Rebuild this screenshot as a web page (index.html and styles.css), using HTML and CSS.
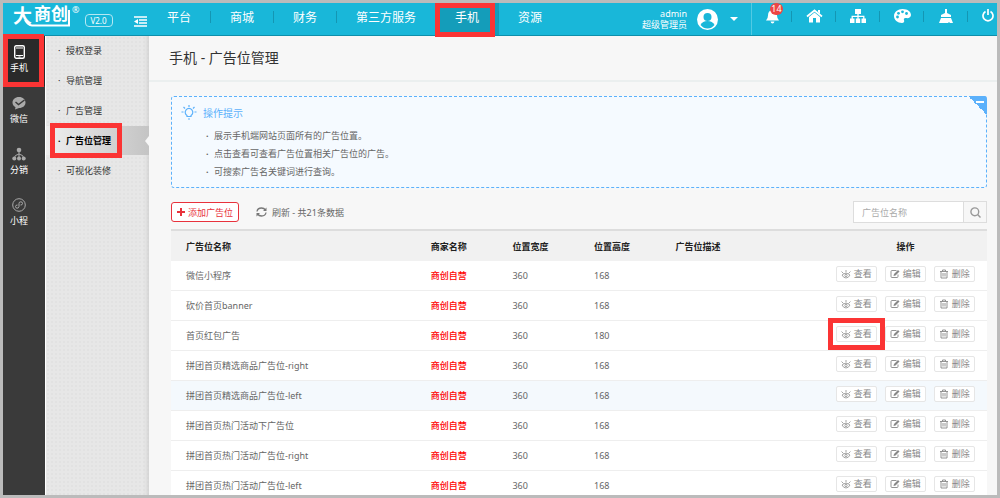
FILE: index.html
```
<!DOCTYPE html>
<html lang="zh-CN">
<head>
  <meta charset="utf-8">
  <title>手机 - 广告位管理</title>
  <link rel="stylesheet" href="styles.css">
</head>
<body>
  <!-- Icons -->
  <svg class="sprite" aria-hidden="true">
    <symbol id="i-view" viewBox="0 0 20 20"><path d="M2 12q8-7 16 0-3 6-8 6t-8-6zM1 5l4 4M19 5l-4 4M10 2v5" fill="none" stroke="currentColor" stroke-width="1.500"/><circle cx="10" cy="13" r="2.300" fill="none" stroke="currentColor" stroke-width="1.500"/></symbol>
    <symbol id="i-edit" viewBox="0 0 20 20"><path d="M13 3H4Q2 3 2 5v10q0 2 2 2h10q2 0 2-2v-4" fill="none" stroke="currentColor" stroke-width="1.800"/><path d="M7 14l1-4 8-8 3 3-8 8z" fill="currentColor"/></symbol>
    <symbol id="i-del" viewBox="0 0 20 20"><path d="M2 5h16M7 5V2h6v3M4 5v13h12V5M8 8v7M12 8v7" fill="none" stroke="currentColor" stroke-width="1.800"/></symbol>
  </svg>

  <div class="frame">
    <!-- Top bar -->
    <header class="header">
      <div class="brand">
        <a href="#" class="logo">大<span>商创</span><svg class="logo-line" viewBox="0 0 58 22"><path d="M12 14q3 5 7 5.500h37V4" fill="none" stroke="#fff" stroke-width="2"/></svg></a>
        <sup class="reg">®</sup>
        <span class="version">V2.0</span>
        <button class="fold" aria-label="收起菜单"><svg width="13" height="11" viewBox="0 0 13 11"><path d="M0 1h13M5 4h8M5 7h8M0 10h13" stroke="#fff" stroke-width="1.600"/><path d="M4 3v5L0 5.500z" fill="#fff"/></svg></button>
      </div>
      <nav class="nav">
        <a href="#">平台</a>
        <a href="#">商城</a>
        <a href="#">财务</a>
        <a href="#">第三方服务</a>
        <a href="#" class="current">手机<span class="mark mark-nav"></span></a>
        <a href="#">资源</a>
      </nav>
      <div class="user">
        <div class="user-name">admin<br>超级管理员</div>
        <svg width="21" height="21" viewBox="0 0 21 21"><circle cx="10.500" cy="10.500" r="10.500" fill="#fff"/><circle cx="10.500" cy="8" r="4" fill="#19b7d9"/><path d="M3.500 16q2-4 7-4t7 4q-3 3.500-7 3.500t-7-3.500z" fill="#19b7d9"/></svg>
        <span class="caret"></span>
      </div>
      <div class="tools">
        <button class="tool tool-bell" aria-label="消息"><svg width="13" height="15" viewBox="0 0 13 15"><path d="M6.500 0q1 0 1 1.300Q11 2 11 6.500q0 3 2 5H0q2-2 2-5Q2 2 5.500 1.300 5.500 0 6.500 0zM4.500 12.500h4q-.5 2-2 2t-2-2z" fill="#fff"/></svg><span class="badge">14</span></button>
        <button class="tool" aria-label="首页"><svg width="17" height="14" viewBox="0 0 17 14"><path d="M1 7.500l7.500-6 7.500 6" fill="none" stroke="#fff" stroke-width="1.800"/><path d="M12 1h2v4l-2-2zM3 8l5.500-4.500L14 8v5.500h-4V9H7v4.500H3z" fill="#fff"/></svg></button>
        <button class="tool" aria-label="站点地图"><svg width="16" height="14" viewBox="0 0 16 14"><path d="M5 0h6v5H5zM0 9.500h4.500V14H0zM5.800 9.500h4.400V14H5.800zM11.500 9.500H16V14h-4.500z" fill="#fff"/><path d="M8 4v6M2.200 10V7.300h11.600V10" fill="none" stroke="#fff" stroke-width="1.300"/></svg></button>
        <button class="tool" aria-label="换肤"><svg width="17" height="14" viewBox="0 0 17 14"><path d="M8.500 0C14 0 17 3 17 6c0 2.500-2.500 3.500-5 3-2-.3-2.500 1-2 2 .8 2-.5 3-2 3C3.500 14 0 11 0 7s4-7 8.500-7z" fill="#fff"/><g fill="#19b7d9"><circle cx="3.500" cy="8" r="1.400"/><circle cx="4.500" cy="4.300" r="1.400"/><circle cx="8.500" cy="2.800" r="1.400"/><circle cx="12.500" cy="4.500" r="1.400"/></g></svg></button>
        <button class="tool" aria-label="清除缓存"><svg width="14" height="14" viewBox="0 0 14 14"><path d="M6 0h2v4l4 2v2H2V6l4-2zM2 9h10l2 5h-3l-1-1-1 1H0z" fill="#fff"/></svg></button>
        <button class="tool tool-exit" aria-label="退出"><svg width="12" height="13" viewBox="0 0 12 13"><path d="M3.500 2.500a5 5 0 1 0 5 0M6 0v6" fill="none" stroke="#fff" stroke-width="1.700"/></svg></button>
      </div>
    </header>

    <div class="main">
      <!-- Left modules -->
      <aside class="modules">
        <a href="#" class="module current">
          <svg width="11" height="14" viewBox="0 0 11 14"><rect x=".7" y=".7" width="9.600" height="12.600" rx="1.500" fill="none" stroke="#fff" stroke-width="1.400"/><path d="M2 3h7M2 10.500h7" stroke="#fff"/><path d="M4.500 12h2" stroke="#fff"/></svg>
          手机<span class="mark mark-module"></span>
        </a>
        <a href="#" class="module">
          <svg width="14" height="14" viewBox="0 0 14 14"><path d="M7 1c4 0 6.500 2.500 6.500 5.500S11 12 7 12l-4 1.500.5-2.300C1.500 10 .5 8.500.5 6.500.5 3.500 3 1 7 1z" fill="#aaa"/><path d="M3.500 6l3 2.500 6-4.500" fill="none" stroke="#3a3a3a" stroke-width="1.500"/></svg>
          微信
        </a>
        <a href="#" class="module">
          <svg width="14" height="14" viewBox="0 0 14 14"><g fill="#aaa"><circle cx="7" cy="3" r="2.300"/><circle cx="2.300" cy="11.500" r="2"/><circle cx="7" cy="11.500" r="2"/><circle cx="11.700" cy="11.500" r="2"/></g><path d="M7 4v7M2.300 11q0-3 4.700-4 4.700 1 4.700 4" fill="none" stroke="#aaa"/></svg>
          分销
        </a>
        <a href="#" class="module">
          <svg width="14" height="14" viewBox="0 0 14 14"><circle cx="7" cy="7" r="6.300" fill="none" stroke="#aaa"/><path d="M5.500 7Q3.500 7 3.500 8.500T5 10.200 7 8.500V5.500Q7 3.800 8.800 3.800t1.700 1.700T8.500 7" fill="none" stroke="#aaa"/></svg>
          小程
        </a>
      </aside>

      <!-- Sub menu -->
      <nav class="submenu">
        <a href="#">授权登录</a>
        <a href="#">导航管理</a>
        <a href="#">广告管理</a>
        <a href="#" class="current">广告位管理<span class="mark mark-sub"></span></a>
        <a href="#">可视化装修</a>
      </nav>

      <!-- Content -->
      <main class="content">
        <h1 class="title">手机 - 广告位管理</h1>

        <section class="tips">
          <button class="tips-fold" aria-label="收起提示"></button>
          <h2><svg width="16" height="16" viewBox="0 0 16 16"><path d="M6 11.500V10.500A3.800 3.800 0 1 1 10 10.500v1zM7 14h2M8 0v2M.5 7h2M13.500 7h2M2.500 2l1.500 1.500M13.500 2L12 3.500" fill="none" stroke="#5cb1fb" stroke-width="1.200"/></svg>操作提示</h2>
          <ul>
            <li>展示手机端网站页面所有的广告位置。</li>
            <li>点击查看可查看广告位置相关广告位的广告。</li>
            <li>可搜索广告名关键词进行查询。</li>
          </ul>
        </section>

        <div class="toolbar">
          <button class="add"><svg width="8" height="8" viewBox="0 0 8 8"><path d="M4 0v8M0 4h8" stroke="#e8323c" stroke-width="2"/></svg>添加广告位</button>
          <button class="refresh"><svg width="11" height="10" viewBox="0 0 11 10"><path d="M1 4.500Q1.500 1 5.500 1q2.500 0 4 2M10 5.500Q9.500 9 5.500 9 3 9 1.500 7" fill="none" stroke="#777" stroke-width="1.300"/><path d="M10.500.5V4H7zM.5 9.500V6H4z" fill="#777"/></svg>刷新 - 共21条数据</button>
          <form class="search">
            <input type="text" placeholder="广告位名称" aria-label="广告位名称">
            <button type="button" aria-label="搜索"><svg width="11" height="11" viewBox="0 0 11 11"><circle cx="4.800" cy="4.800" r="3.900" fill="none" stroke="#999" stroke-width="1.400"/><path d="M7.600 7.600L10.500 10.500" stroke="#999" stroke-width="1.400"/></svg></button>
          </form>
        </div>

        <table class="list">
          <thead>
            <tr><th class="w30">广告位名称</th><th class="w10">商家名称</th><th class="w10">位置宽度</th><th class="w10">位置高度</th><th class="w20">广告位描述</th><th class="w20 handle">操作</th></tr>
          </thead>
          <tbody>
            <tr>
              <td>微信小程序</td><td class="shop">商创自营</td><td>360</td><td>168</td><td></td>
              <td class="handle"><div class="btns"><button><svg><use href="#i-view"/></svg>查看</button><button><svg><use href="#i-edit"/></svg>编辑</button><button><svg><use href="#i-del"/></svg>删除</button></div></td>
            </tr>
            <tr>
              <td>砍价首页banner</td><td class="shop">商创自营</td><td>360</td><td>168</td><td></td>
              <td class="handle"><div class="btns"><button><svg><use href="#i-view"/></svg>查看</button><button><svg><use href="#i-edit"/></svg>编辑</button><button><svg><use href="#i-del"/></svg>删除</button></div></td>
            </tr>
            <tr>
              <td>首页红包广告</td><td class="shop">商创自营</td><td>360</td><td>180</td><td></td>
              <td class="handle"><div class="btns"><button><svg><use href="#i-view"/></svg>查看<span class="mark mark-view"></span></button><button><svg><use href="#i-edit"/></svg>编辑</button><button><svg><use href="#i-del"/></svg>删除</button></div></td>
            </tr>
            <tr>
              <td>拼团首页精选商品广告位-right</td><td class="shop">商创自营</td><td>360</td><td>168</td><td></td>
              <td class="handle"><div class="btns"><button><svg><use href="#i-view"/></svg>查看</button><button><svg><use href="#i-edit"/></svg>编辑</button><button><svg><use href="#i-del"/></svg>删除</button></div></td>
            </tr>
            <tr class="hover">
              <td>拼团首页精选商品广告位-left</td><td class="shop">商创自营</td><td>360</td><td>168</td><td></td>
              <td class="handle"><div class="btns"><button><svg><use href="#i-view"/></svg>查看</button><button><svg><use href="#i-edit"/></svg>编辑</button><button><svg><use href="#i-del"/></svg>删除</button></div></td>
            </tr>
            <tr>
              <td>拼团首页热门活动下广告位</td><td class="shop">商创自营</td><td>360</td><td>168</td><td></td>
              <td class="handle"><div class="btns"><button><svg><use href="#i-view"/></svg>查看</button><button><svg><use href="#i-edit"/></svg>编辑</button><button><svg><use href="#i-del"/></svg>删除</button></div></td>
            </tr>
            <tr>
              <td>拼团首页热门活动广告位-right</td><td class="shop">商创自营</td><td>360</td><td>168</td><td></td>
              <td class="handle"><div class="btns"><button><svg><use href="#i-view"/></svg>查看</button><button><svg><use href="#i-edit"/></svg>编辑</button><button><svg><use href="#i-del"/></svg>删除</button></div></td>
            </tr>
            <tr>
              <td>拼团首页热门活动广告位-left</td><td class="shop">商创自营</td><td>360</td><td>168</td><td></td>
              <td class="handle"><div class="btns"><button><svg><use href="#i-view"/></svg>查看</button><button><svg><use href="#i-edit"/></svg>编辑</button><button><svg><use href="#i-del"/></svg>删除</button></div></td>
            </tr>
          </tbody>
        </table>
      </main>
    </div>
  </div>
</body>
</html>
```
FILE: styles.css
```
* {
  box-sizing: border-box;
}

body {
  margin: 0;
  font-family: "Noto Sans", "Noto Sans CJK SC", sans-serif;
  font-size: 9px;
  color: #666;
}

a {
  color: inherit;
  text-decoration: none;
}

button, input {
  font: inherit;
  color: inherit;
  margin: 0;
  padding: 0;
  border: none;
  background: none;
}

button {
  cursor: pointer;
}

svg {
  flex: none;
}

.sprite {
  display: none;
}

.frame {
  height: 100vh;
  border: 3px solid #bbb;
  display: flex;
  flex-direction: column;
  overflow: hidden;
}

/* red highlight boxes */
.mark {
  position: absolute;
  border: 5px solid #fb3434;
  pointer-events: none;
  z-index: 5;
}

.mark-nav { inset: 0 4px -2px -1px; }
.mark-module { inset: -2px 1px -1px 0; }
.mark-sub { inset: -3px 27px -3px 4px; }
.mark-view { inset: -9px; }

/* Header */
.header {
  display: flex;
  flex: none;
  height: 33px;
  background: #19b7d9;
  border-bottom: 1px solid #0e8fab;
  color: #fff;
}

.brand {
  display: flex;
  width: 145px;
  padding-left: 10px;
}

.logo {
  position: relative;
  width: 58px;
  font-size: 19px;
  font-weight: bold;
  line-height: 27px;
  white-space: nowrap;
}

.logo span {
  font-size: 17px;
  vertical-align: top;
  line-height: 22px;
  margin-left: 2px;
}

.logo-line {
  position: absolute;
  left: 0;
  top: 3px;
  width: 58px;
  height: 22px;
}

.reg {
  font-size: 9px;
  line-height: 14px;
  margin-left: 1px;
}

.version {
  width: 28px;
  height: 13px;
  margin: 11px 0 0 5px;
  border: 1px solid #b5e8f3;
  border-radius: 4px;
  font-size: 8px;
  line-height: 11px;
  text-align: center;
}

.fold {
  margin: 9px 0 0 21px;
  height: 22px;
}

.nav {
  display: flex;
  flex: 1;
  font-size: 12px;
  line-height: 30px;
}

.nav a {
  position: relative;
  padding: 0 20px 0 19px;
  white-space: nowrap;
}

.nav a:not(:last-child)::after {
  content: "";
  position: absolute;
  right: 0;
  top: 8px;
  height: 12px;
  border-right: 1px solid #1496b3;
}

.nav .current {
  background: #149dba;
}

.user {
  display: flex;
  align-items: center;
  gap: 10px;
  padding-right: 13px;
  border-right: 1px solid #52cae3;
}

.user-name {
  text-align: right;
  line-height: 11px;
}

.caret {
  border: 4px solid transparent;
  border-top-color: #fff;
  border-bottom: none;
  margin-left: 2px;
}

.tools {
  display: flex;
}

.tool {
  position: relative;
  display: flex;
  justify-content: center;
  width: 44px;
  padding-top: 6px;
}

.tool:not(:last-child)::after {
  content: "";
  position: absolute;
  right: 0;
  top: 8px;
  height: 11px;
  border-right: 1px solid #1496b3;
}

.tool-bell {
  width: 40px;
}

.tool-exit {
  width: 29px;
  justify-content: flex-end;
  padding-right: 3px;
}

.badge {
  position: absolute;
  left: 18px;
  top: 0;
  width: 13px;
  height: 12px;
  border-radius: 6px;
  background: #ee4444;
  line-height: 12px;
}

/* Body */
.main {
  display: flex;
  flex: 1;
  min-height: 0;
}

.modules {
  width: 42px;
  background: #3a3a3a;
  color: #fff;
}

.module {
  position: relative;
  display: flex;
  flex-direction: column;
  align-items: center;
  height: 50px;
  margin-bottom: 1px;
  padding: 9px 10px 0 0;
  line-height: 18px;
}

.module.current {
  background: #2a2a2a;
}

.submenu {
  display: flex;
  flex-direction: column;
  gap: 1px;
  width: 104px;
  background: radial-gradient(#e2e2e2 1px, transparent 1px) 0 0 / 4px 4px, #e7e7e7;
  border-left: 1px solid #fff;
  box-shadow: inset -6px 0 5px -5px #ccc;
  color: #333;
}

.submenu a {
  position: relative;
  height: 29px;
  padding-left: 20px;
  line-height: 29px;
}

.submenu a::before {
  content: "·";
  position: absolute;
  left: 12px;
}

.submenu .current {
  background: linear-gradient(90deg, #eee, #c4c4c4);
  color: #000;
  font-weight: bold;
}

.submenu .current::after {
  content: "";
  position: absolute;
  right: 0;
  top: 10px;
  border: 5px solid transparent;
  border-left: none;
  border-right: 4px solid #f7f7f7;
}

.content {
  flex: 1;
  background: #f7f7f7;
}

.title {
  margin: 0 0 14px;
  padding-left: 20px;
  border-bottom: 2px solid #ebefef;
  font-size: 14px;
  font-weight: normal;
  line-height: 44px;
  color: #333;
}

.tips {
  position: relative;
  margin: 0 10px 13px 22px;
  padding: 7px 9px 6px;
  border: 1px dashed #5cb1fb;
  border-radius: 3px;
  background: #f5faff;
}

.tips h2 {
  display: flex;
  align-items: center;
  gap: 6px;
  margin: 0 0 5px;
  font-size: 10px;
  font-weight: normal;
  line-height: 18px;
  color: #5cb1fb;
}

.tips ul {
  margin: 0;
  padding: 0 0 0 33px;
  list-style: none;
  line-height: 18px;
}

.tips li::before {
  content: "·";
  float: left;
  margin-left: -8px;
  font-weight: bold;
}

.tips-fold {
  position: absolute;
  right: -1px;
  top: -1px;
  width: 19px;
  height: 19px;
  border-top-right-radius: 3px;
  background: linear-gradient(45deg, transparent 50%, #5cb1fb 50%);
}

.tips-fold::after {
  content: "";
  position: absolute;
  right: 3px;
  top: 5px;
  width: 8px;
  height: 2px;
  background: #fff;
}

.toolbar {
  display: flex;
  align-items: center;
  margin: 0 10px 6px 22px;
}

.add, .refresh {
  display: flex;
  align-items: center;
}

.add {
  gap: 3px;
  height: 20px;
  padding: 0 5px;
  border: 1px solid #e8323c;
  border-radius: 3px;
  background: #fff;
  color: #e8323c;
}

.refresh {
  gap: 5px;
  margin-left: 17px;
}

.search {
  display: flex;
  width: 134px;
  height: 22px;
  margin-left: auto;
  border: 1px solid #ddd;
  background: #fff;
}

.search input {
  flex: 1;
  min-width: 0;
  padding-left: 8px;
}

.search input::placeholder {
  color: #aaa;
}

.search button {
  display: flex;
  align-items: center;
  justify-content: center;
  width: 23px;
  border-left: 1px solid #ddd;
  background: #f7f7f7;
}

/* Table */
.list {
  width: calc(100% - 32px);
  margin-left: 22px;
  border-spacing: 0;
  border-top: 2px solid #ddd;
  table-layout: fixed;
  background: #fff;
}

.list th, .list td {
  height: 30px;
  padding: 0 0 0 15px;
  text-align: left;
  white-space: nowrap;
}

.list th {
  background: #f1f1f1;
  color: #222;
}

.list td {
  border-bottom: 1px solid #eee;
}

.list .hover td {
  background: #f4f9fd;
}

.list .handle {
  padding: 0;
  text-align: center;
}

.list .shop {
  color: #f00;
  font-weight: 500;
}

.w30 { width: 30%; }
.w20 { width: 20%; }
.w10 { width: 10%; }

.btns {
  display: flex;
  justify-content: center;
  gap: 8px;
  padding-bottom: 4px;
}

.btns button {
  position: relative;
  display: flex;
  align-items: center;
  justify-content: center;
  gap: 3px;
  width: 41px;
  height: 16px;
  border: 1px solid #e6e6e6;
  border-radius: 2px;
  background: #fff;
  color: #888;
}

.btns svg {
  width: 10px;
  height: 10px;
}
```
